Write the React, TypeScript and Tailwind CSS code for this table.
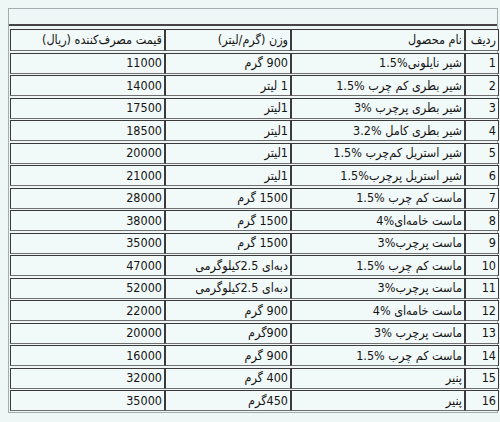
import React from "react";

type Row = { n: string; name: string; w: string; p: string };

const rows: Row[] = [
  { n: "1", name: "شیر نایلونی%1.5", w: "900 گرم", p: "11000" },
  { n: "2", name: "شیر بطری کم چرب %1.5", w: "1 لیتر", p: "14000" },
  { n: "3", name: "شیر بطری پرچرب %3", w: "1لیتر", p: "17500" },
  { n: "4", name: "شیر بطری کامل %3.2", w: "1لیتر", p: "18500" },
  { n: "5", name: "شیر استریل کم‌چرب %1.5", w: "1لیتر", p: "20000" },
  { n: "6", name: "شیر استریل پرچرب%1.5", w: "1لیتر", p: "21000" },
  { n: "7", name: "ماست کم چرب %1.5", w: "1500 گرم", p: "28000" },
  { n: "8", name: "ماست خامه‌ای%4", w: "1500 گرم", p: "38000" },
  { n: "9", name: "ماست پرچرب%3", w: "1500 گرم", p: "35000" },
  { n: "10", name: "ماست کم چرب %1.5", w: "دبه‌ای 2.5کیلوگرمی", p: "47000" },
  { n: "11", name: "ماست پرچرب%3", w: "دبه‌ای 2.5کیلوگرمی", p: "52000" },
  { n: "12", name: "ماست خامه‌ای %4", w: "900 گرم", p: "22000" },
  { n: "13", name: "ماست پرچرب %3", w: "900گرم", p: "20000" },
  { n: "14", name: "ماست کم چرب %1.5", w: "900 گرم", p: "16000" },
  { n: "15", name: "پنیر", w: "400 گرم", p: "32000" },
  { n: "16", name: "پنیر", w: "450گرم", p: "35000" },
];

function Cell({ children }: { children?: React.ReactNode }) {
  return (
    <div className="flex items-center justify-start overflow-hidden whitespace-nowrap border border-t-[#3a3a3a] border-l-[#3a3a3a] border-b-[#707070] border-r-[#3a3a3a] bg-[#f2f9f9] pr-[2px] pt-[1px] leading-none">
      {children}
    </div>
  );
}

export default function App() {
  return (
    <div className="h-[422px] w-[500px] overflow-hidden bg-[#eef6f6] font-['DejaVu_Sans_Condensed','DejaVu_Sans',sans-serif] text-[12.5px] text-[#141414]">
      <div className="ml-[8px] mt-[8px] w-[490px] border border-[#a3adad]">
        <div className="h-[17px] border-b-2 border-[#454545]" />
        <div className="pl-[1px] pt-[3px] pb-[1px]">
          <div
            dir="rtl"
            className="grid w-[489px] grid-cols-[34px_174px_126px_155px] grid-rows-[22px] auto-rows-[21px] gap-y-[1.5px]"
          >
            <Cell>ردیف</Cell>
            <Cell>نام محصول</Cell>
            <Cell>وزن (گرم/لیتر)</Cell>
            <Cell>قیمت مصرف‌کننده (ریال)</Cell>
            {rows.map((r) => (
              <React.Fragment key={r.n}>
                <Cell>{r.n}</Cell>
                <Cell>{r.name}</Cell>
                <Cell>{r.w}</Cell>
                <Cell>{r.p}</Cell>
              </React.Fragment>
            ))}
          </div>
        </div>
      </div>
    </div>
  );
}
